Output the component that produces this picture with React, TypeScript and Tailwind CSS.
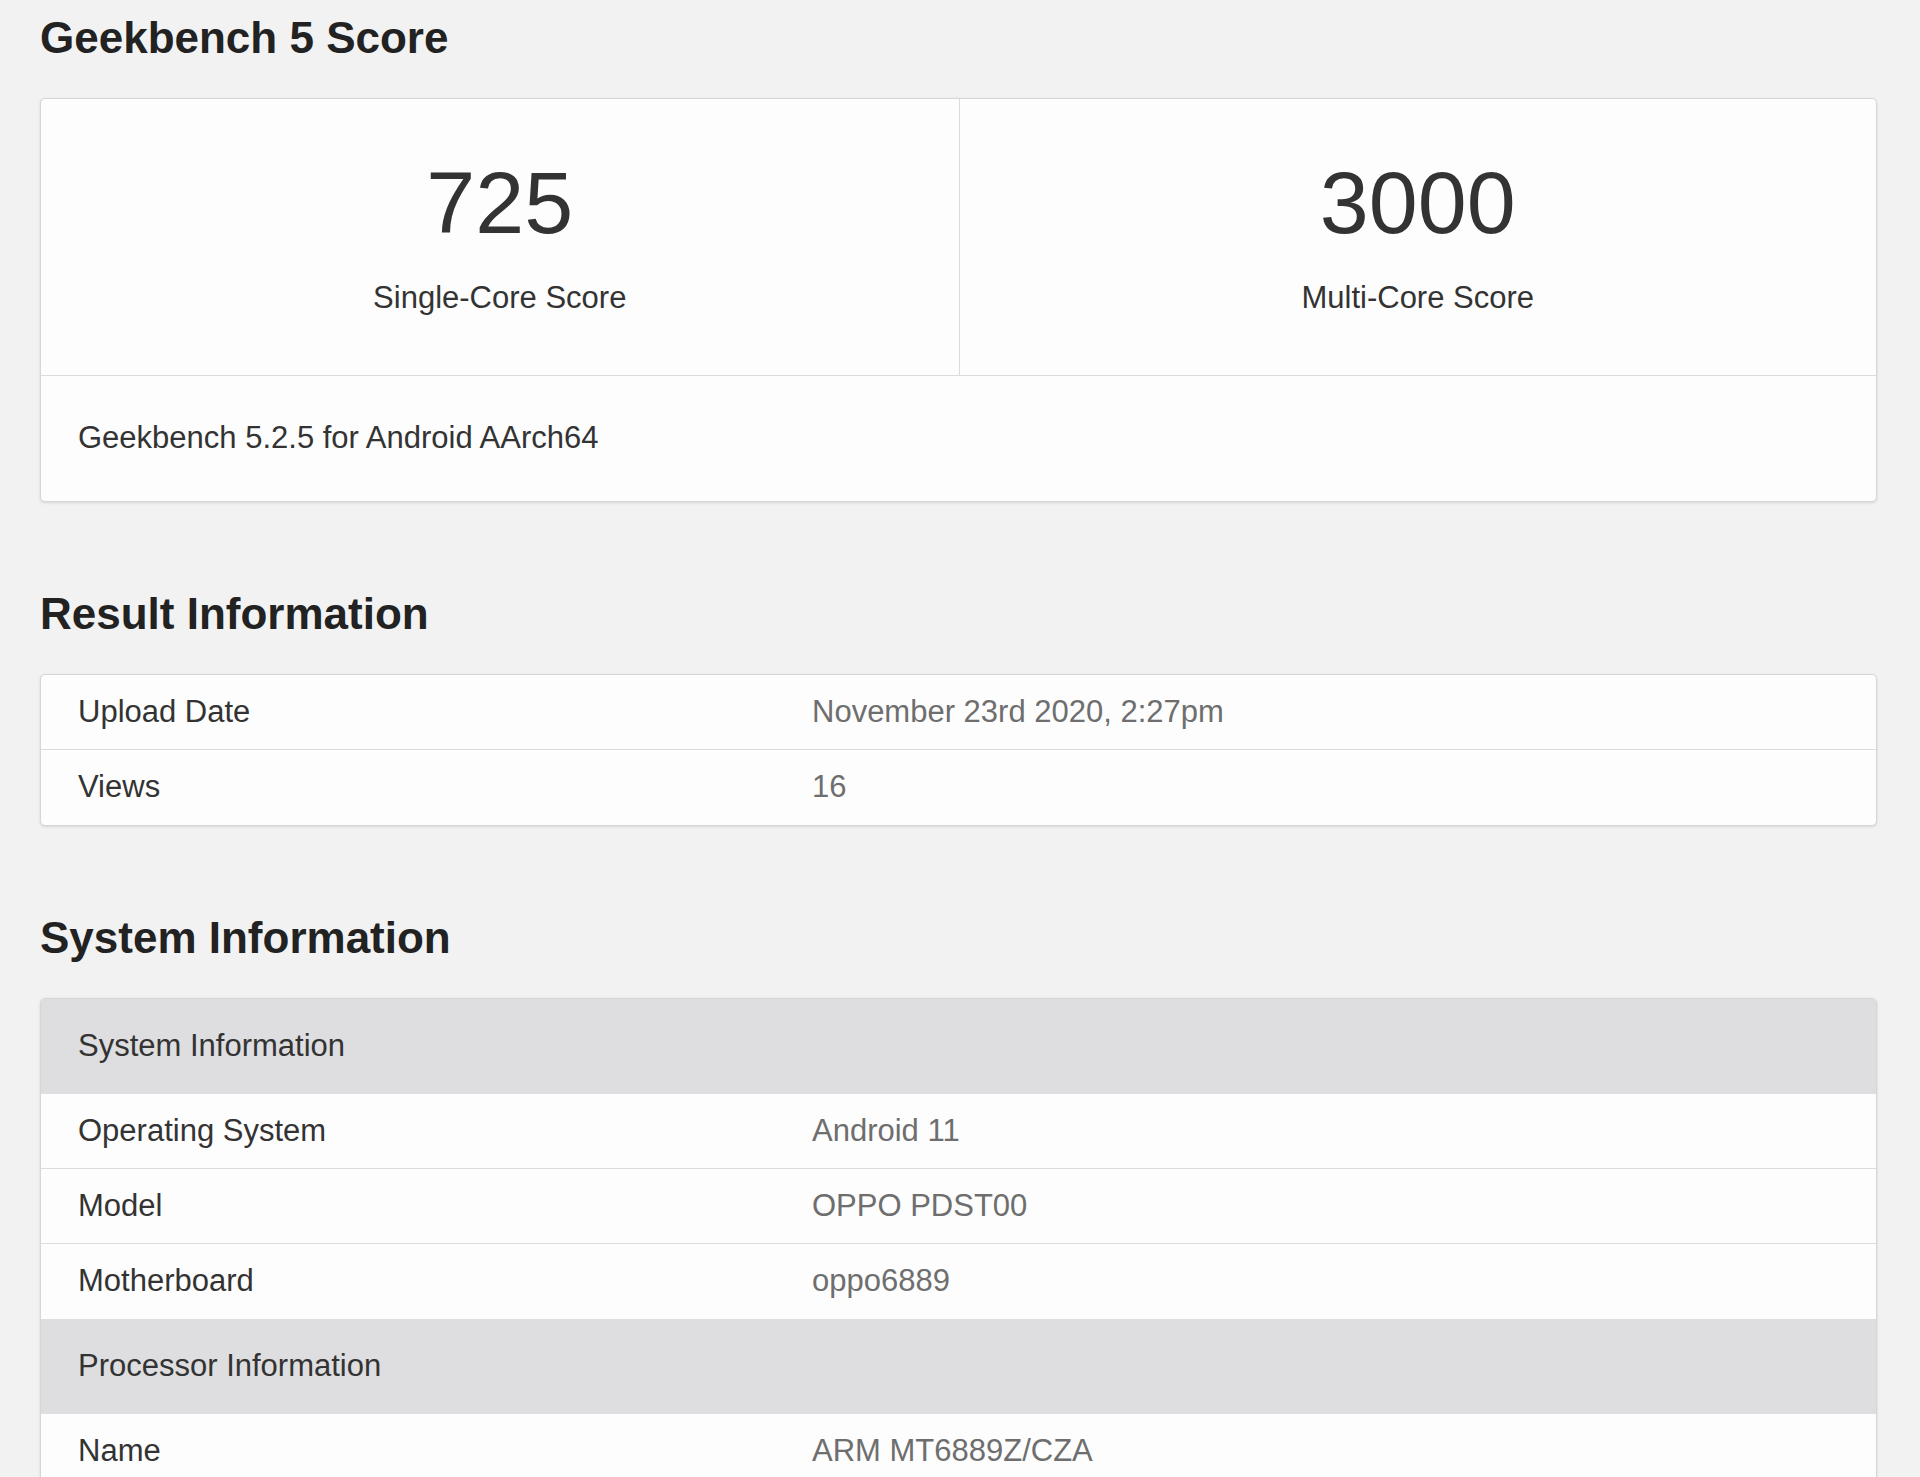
const resultRows = [
  { label: 'Upload Date', value: 'November 23rd 2020, 2:27pm' },
  { label: 'Views', value: '16' },
];

type SysRow = { header: string } | { label: string; value: string };

const systemRows: SysRow[] = [
  { header: 'System Information' },
  { label: 'Operating System', value: 'Android 11' },
  { label: 'Model', value: 'OPPO PDST00' },
  { label: 'Motherboard', value: 'oppo6889' },
  { header: 'Processor Information' },
  { label: 'Name', value: 'ARM MT6889Z/CZA' },
];

function Heading({ children, className = '' }: { children: React.ReactNode; className?: string }) {
  return (
    <h2 className={`text-[44px] leading-[52px] font-bold text-[#222] ${className}`}>{children}</h2>
  );
}

function Card({ children, className = '' }: { children: React.ReactNode; className?: string }) {
  return (
    <div
      className={`bg-[#fdfdfd] border border-[#d6d6d6] rounded-[5px] shadow-[0_1px_3px_rgba(0,0,0,0.12)] overflow-hidden ${className}`}
    >
      {children}
    </div>
  );
}

function InfoRow({ label, value, last }: { label: string; value: string; last?: boolean }) {
  return (
    <div className={`grid grid-cols-[2fr_3fr] h-[75px] items-center ${last ? '' : 'border-b border-[#dcdcdc]'}`}>
      <span className="px-[37px] text-[#333]">{label}</span>
      <span className="px-[37px] text-[#6e6e6e]">{value}</span>
    </div>
  );
}

export default function App() {
  return (
    <div
      className="min-h-screen bg-[#f2f2f2] pl-[40px] pr-[43px] pt-[12px] pb-[40px] text-[31px]"
      style={{ fontFamily: '"Liberation Sans", Arial, sans-serif' }}
    >
      <Heading>Geekbench 5 Score</Heading>

      {/* Scores */}
      <Card className="mt-[34px]">
        <div className="grid grid-cols-2 border-b border-[#dcdcdc]">
          <div className="flex flex-col items-center h-[276px] pt-[60px]">
            <span className="text-[88px] leading-none text-[#333]">725</span>
            <span className="mt-[32px] leading-[37px] text-[#333]">Single-Core Score</span>
          </div>
          <div className="flex flex-col items-center h-[276px] pt-[60px] border-l border-[#dcdcdc]">
            <span className="text-[88px] leading-none text-[#333]">3000</span>
            <span className="mt-[32px] leading-[37px] text-[#333]">Multi-Core Score</span>
          </div>
        </div>
        <div className="h-[125px] flex items-center px-[37px] text-[#333]">
          Geekbench 5.2.5 for Android AArch64
        </div>
      </Card>

      <Heading className="mt-[86px]">Result Information</Heading>
      <Card className="mt-[34px]">
        {resultRows.map((r, i) => (
          <InfoRow key={r.label} label={r.label} value={r.value} last={i === resultRows.length - 1} />
        ))}
      </Card>

      <Heading className="mt-[86px]">System Information</Heading>
      <Card className="mt-[34px]">
        {systemRows.map((r, i) => {
          if ('header' in r) {
            return (
              <div key={r.header} className="h-[95px] flex items-center px-[37px] bg-[#dedee0] text-[#333]">
                {r.header}
              </div>
            );
          }
          const next = systemRows[i + 1];
          const last = !next || 'header' in next;
          return <InfoRow key={r.label} label={r.label} value={r.value} last={last} />;
        })}
      </Card>
    </div>
  );
}
